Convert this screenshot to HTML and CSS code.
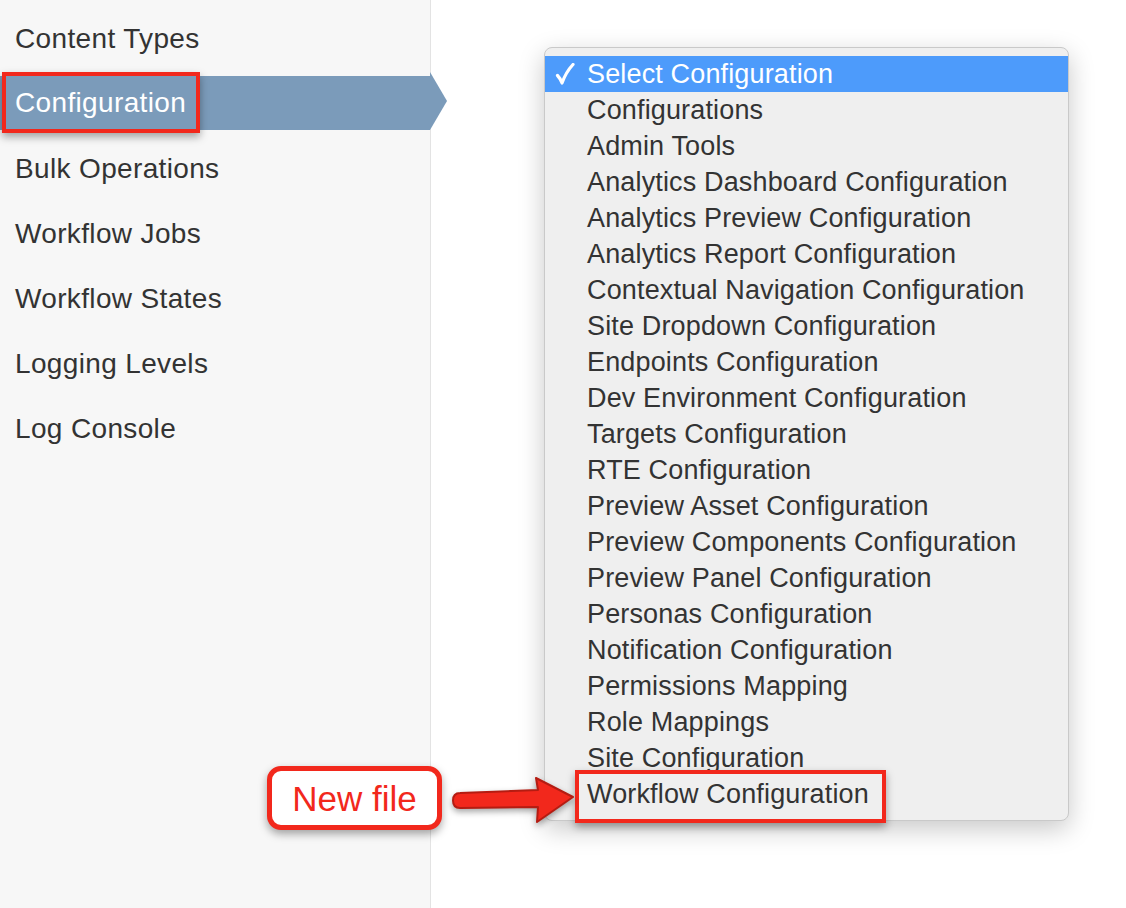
FILE: index.html
```html
<!DOCTYPE html>
<html>
<head>
<meta charset="utf-8">
<link rel="stylesheet" href="styles.css">
</head>
<body>
<div class="page">
  <aside class="sidebar">
    <ul class="nav">
      <li class="nav-item">Content Types</li>
      <li class="nav-item active"><span class="nav-label">Configuration</span></li>
      <li class="nav-item">Bulk Operations</li>
      <li class="nav-item">Workflow Jobs</li>
      <li class="nav-item">Workflow States</li>
      <li class="nav-item">Logging Levels</li>
      <li class="nav-item">Log Console</li>
    </ul>
  </aside>
  <main class="main"></main>

  <div class="dropdown">
    <ul class="options">
      <li class="option selected"><svg class="check" width="20" height="22" viewBox="0 0 20 22"><path d="M2.5 12.5 Q5 15 7 20 Q11 9 18 1.5" fill="none" stroke="#ffffff" stroke-width="3.2" stroke-linecap="round" stroke-linejoin="round"/></svg>Select Configuration</li>
      <li class="option">Configurations</li>
      <li class="option">Admin Tools</li>
      <li class="option">Analytics Dashboard Configuration</li>
      <li class="option">Analytics Preview Configuration</li>
      <li class="option">Analytics Report Configuration</li>
      <li class="option">Contextual Navigation Configuration</li>
      <li class="option">Site Dropdown Configuration</li>
      <li class="option">Endpoints Configuration</li>
      <li class="option">Dev Environment Configuration</li>
      <li class="option">Targets Configuration</li>
      <li class="option">RTE Configuration</li>
      <li class="option">Preview Asset Configuration</li>
      <li class="option">Preview Components Configuration</li>
      <li class="option">Preview Panel Configuration</li>
      <li class="option">Personas Configuration</li>
      <li class="option">Notification Configuration</li>
      <li class="option">Permissions Mapping</li>
      <li class="option">Role Mappings</li>
      <li class="option">Site Configuration</li>
      <li class="option">Workflow Configuration</li>
    </ul>
  </div>

  <div class="highlight-box hl-config"></div>
  <div class="highlight-box hl-workflow"></div>

  <div class="callout">New file</div>
  <svg class="callout-arrow" width="130" height="56" viewBox="0 0 130 56">
    <path d="M8 21 L86 18 L84 6 L121 25 L85 50 L86 35 L8 36 Q1 36 1 28.5 Q1 21 8 21 Z" fill="#f2281c" stroke="#b51c12" stroke-width="2" stroke-linejoin="round"/>
  </svg>
</div>
</body>
</html>
```
FILE: styles.css
```css
* { box-sizing: border-box; }
html, body {
  margin: 0;
  padding: 0;
  background: #ffffff;
}
body {
  font-family: "Liberation Sans", Arial, sans-serif;
  color: #333333;
}
.page {
  position: relative;
  display: flex;
  width: 1126px;
  height: 908px;
  overflow: hidden;
}
.sidebar {
  width: 431px;
  flex: none;
  height: 908px;
  background: #f7f7f7;
  border-right: 1px solid #e3e3e3;
  position: relative;
  z-index: 1;
}
.main {
  flex: 1;
  background: #ffffff;
}
.nav {
  list-style: none;
  margin: 0;
  padding: 12px 0 0;
  display: flex;
  flex-direction: column;
  gap: 11px;
}
.nav-item {
  height: 54px;
  line-height: 54px;
  padding-left: 15px;
  font-size: 28px;
  letter-spacing: 0.35px;
  color: #333333;
  white-space: nowrap;
}
.nav-item.active {
  position: relative;
  width: 430px;
  margin-top: -1px;
  margin-bottom: 1px;
  background: #7b9bba;
  color: #ffffff;
}
.nav-item.active::after {
  content: "";
  position: absolute;
  left: 100%;
  top: -4px;
  width: 0;
  height: 0;
  border-left: 17px solid #7b9bba;
  border-top: 29px solid transparent;
  border-bottom: 29px solid transparent;
}

.dropdown {
  position: absolute;
  left: 544px;
  top: 47px;
  width: 525px;
  height: 774px;
  background: #efefef;
  border: 1px solid #c9c9c9;
  border-radius: 8px;
  box-shadow: 0 8px 26px rgba(0, 0, 0, 0.22);
  padding: 8px 0;
  z-index: 2;
}
.options {
  list-style: none;
  margin: 0;
  padding: 0;
}
.option {
  position: relative;
  height: 36px;
  line-height: 36px;
  padding-left: 42px;
  font-size: 27px;
  letter-spacing: 0.15px;
  color: #333333;
  white-space: nowrap;
}
.option.selected {
  background: #4d9bfb;
  color: #ffffff;
}
.check {
  position: absolute;
  left: 10px;
  top: 7px;
}

.highlight-box {
  position: absolute;
  border: 4px solid #f2281c;
  box-shadow: 0 4px 8px rgba(0, 0, 0, 0.35);
  z-index: 3;
}
.hl-config {
  left: 2px;
  top: 72px;
  width: 198px;
  height: 61px;
}
.hl-workflow {
  left: 575px;
  top: 770px;
  width: 311px;
  height: 53px;
}

.callout {
  position: absolute;
  left: 267px;
  top: 766px;
  width: 175px;
  height: 64px;
  border: 5px solid #f2281c;
  border-radius: 14px;
  background: #ffffff;
  color: #f2281c;
  font-size: 35px;
  line-height: 56px;
  text-align: center;
  box-shadow: 0 4px 8px rgba(0, 0, 0, 0.35);
  z-index: 3;
}
.callout-arrow {
  position: absolute;
  left: 452px;
  top: 772px;
  z-index: 3;
  filter: drop-shadow(0 3px 3px rgba(0, 0, 0, 0.35));
}
```
